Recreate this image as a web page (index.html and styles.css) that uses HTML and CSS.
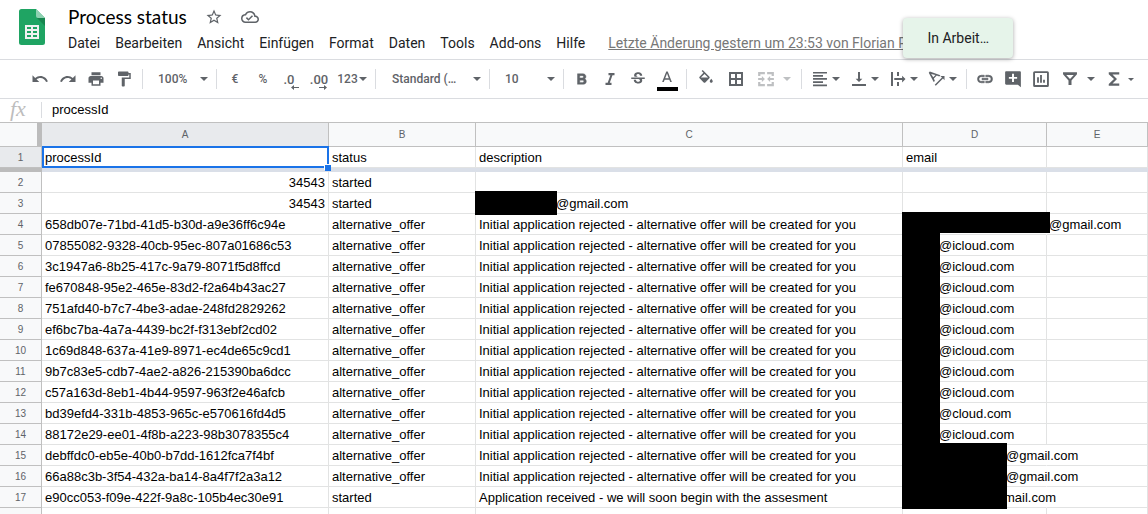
FILE: index.html
```html
<!DOCTYPE html>
<html lang="de">
<head>
<meta charset="utf-8">
<title>Process status</title>
<link rel="stylesheet" href="styles.css">
</head>
<body>
<header class="header">
  <svg class="logo" viewBox="0 0 26 36" aria-hidden="true">
    <path fill="#1fa463" d="M2.500 0H17l9 9v24.500a2.500 2.500 0 0 1-2.500 2.500h-21A2.500 2.500 0 0 1 0 33.500v-31A2.500 2.500 0 0 1 2.500 0z"/>
    <path fill="#17864f" d="M18 9h8v8z"/>
    <path fill="#8ed1b1" d="M17 0l9 9h-7a2 2 0 0 1-2-2z"/>
    <path fill="#f1f1f1" fill-rule="evenodd" d="M6 16h14v14H6zM8 18v2h4v-2zm6 0v2h4v-2zM8 22v2h4v-2zm6 0v2h4v-2zM8 26v2h4v-2zm6 0v2h4v-2z"/>
  </svg>
  <div class="heading">
    <div class="title-row">
      <h1 class="title">Process status</h1>
      <button class="title-button" aria-label="Markieren"><svg viewBox="0 0 24 24"><path d="M22 9.240l-7.190-.62L12 2 9.190 8.630 2 9.240l5.460 4.730L5.820 21 12 17.270 18.180 21l-1.630-7.030L22 9.240zM12 15.400l-3.760 2.270 1-4.280-3.320-2.880 4.380-.38L12 6.100l1.710 4.040 4.380.38-3.320 2.880 1 4.280L12 15.400z"/></svg></button>
      <button class="title-button" aria-label="Status"><svg viewBox="0 0 24 24"><path d="M19.350 10.040A7.490 7.490 0 0 0 12 4C9.110 4 6.600 5.640 5.350 8.040A5.994 5.994 0 0 0 0 14c0 3.310 2.690 6 6 6h13c2.760 0 5-2.240 5-5 0-2.640-2.050-4.780-4.650-4.960zM19 18H6c-2.210 0-4-1.790-4-4 0-2.050 1.530-3.760 3.560-3.970l1.070-.11.5-.95A5.469 5.469 0 0 1 12 6c2.620 0 4.880 1.860 5.390 4.430l.3 1.500 1.530.11A2.980 2.980 0 0 1 22 15c0 1.650-1.350 3-3 3zm-9-3.820l-2.090-2.090L6.500 13.500 10 17l6.010-6.010-1.410-1.410z"/></svg></button>
    </div>
    <nav class="menu">
      <button>Datei</button><button>Bearbeiten</button><button>Ansicht</button><button>Einfügen</button><button>Format</button><button>Daten</button><button>Tools</button><button>Add-ons</button><button>Hilfe</button>
      <a class="last-edit" href="#">Letzte Änderung gestern um 23:53 von Florian P</a>
    </nav>
  </div>
  <div class="toast" role="status">In Arbeit…</div>
</header>

<div class="toolbar" role="toolbar">
  <button class="tool" aria-label="Rückgängig"><svg viewBox="0 0 24 24"><path d="M12.500 8c-2.650 0-5.050.99-6.900 2.600L2 7v9h9l-3.620-3.620c1.390-1.160 3.160-1.880 5.120-1.880 3.540 0 6.550 2.310 7.600 5.500l2.370-.78C21.080 11.030 17.150 8 12.500 8z"/></svg></button>
  <button class="tool" aria-label="Wiederholen"><svg viewBox="0 0 24 24"><path d="M18.400 10.600C16.550 8.990 14.150 8 11.500 8c-4.650 0-8.580 3.030-9.960 7.220L3.900 16c1.050-3.190 4.050-5.500 7.600-5.500 1.950 0 3.730.72 5.120 1.880L13 16h9V7l-3.600 3.600z"/></svg></button>
  <button class="tool" aria-label="Drucken"><svg viewBox="0 0 24 24"><path d="M19 8H5c-1.660 0-3 1.340-3 3v6h4v4h12v-4h4v-6c0-1.660-1.340-3-3-3zm-3 11H8v-5h8v5zm3-7a1 1 0 1 1 0-2 1 1 0 0 1 0 2zm-1-9H6v4h12V3z"/></svg></button>
  <button class="tool" aria-label="Format übertragen"><svg viewBox="0 0 24 24"><path d="M18 4V3c0-.55-.45-1-1-1H5c-.55 0-1 .45-1 1v4c0 .55.45 1 1 1h12c.55 0 1-.45 1-1V6h1v4H9v11c0 .55.45 1 1 1h2c.55 0 1-.45 1-1v-9h8V4h-3z"/></svg></button>
  <span class="separator"></span>
  <label class="picker picker-small"><select aria-label="Zoom"><option>100%</option></select><i class="caret"></i></label>
  <span class="separator"></span>
  <button class="tool text-tool" aria-label="Währung">€</button>
  <button class="tool text-tool" aria-label="Prozent">%</button>
  <button class="tool text-tool decimal decimal-less" aria-label="Weniger Dezimalstellen">.0<svg class="decimal-arrow" viewBox="0 0 8 5"><path d="M0 2.500L3 0v2h5v1H3v2z"/></svg></button>
  <button class="tool text-tool decimal" aria-label="Mehr Dezimalstellen">.00<svg class="decimal-arrow" viewBox="0 0 8 5"><path d="M8 2.500L5 0v2H0v1h5v2z"/></svg></button>
  <button class="tool text-tool number-format">123<i class="caret"></i></button>
  <span class="separator"></span>
  <label class="picker picker-wide"><select aria-label="Schriftart"><option>Standard (…</option></select><i class="caret"></i></label>
  <span class="separator"></span>
  <label class="picker picker-small"><select aria-label="Schriftgröße"><option>10</option></select><i class="caret"></i></label>
  <span class="separator"></span>
  <button class="tool" aria-label="Fett"><svg viewBox="0 0 24 24"><path d="M15.600 11.790c.97-.67 1.650-1.770 1.650-2.790 0-2.260-1.750-4-4-4H6v14h8.040c2.090 0 3.710-1.700 3.710-3.790 0-1.520-.86-2.820-2.150-3.420zM9 7.500h3.500a1.500 1.500 0 0 1 0 3H9v-3zm4 9H9v-3h4a1.500 1.500 0 0 1 0 3z" stroke="#5f6368" stroke-width=".6"/></svg></button>
  <button class="tool" aria-label="Kursiv"><svg viewBox="0 0 24 24"><path d="M10 4v3h2.500l-3.600 10H6v3h8v-3h-2.300l3.600-10H18V4z"/></svg></button>
  <button class="tool" aria-label="Durchgestrichen"><svg viewBox="0 0 24 24"><path d="M7.240 8.750c-.26-.48-.39-1.030-.39-1.670 0-.61.13-1.160.4-1.670.26-.5.63-.93 1.110-1.290.48-.35 1.050-.63 1.700-.83.66-.19 1.390-.29 2.180-.29.81 0 1.540.11 2.210.34.66.22 1.230.54 1.690.94.47.4.83.88 1.080 1.430s.38 1.150.38 1.810h-3.010c0-.31-.05-.59-.15-.85-.09-.27-.24-.49-.44-.68-.2-.19-.45-.33-.75-.44-.3-.1-.66-.16-1.060-.16-.39 0-.74.04-1.030.13s-.53.21-.72.36c-.19.16-.34.34-.44.55-.1.21-.15.43-.15.66 0 .48.25.88.74 1.210.38.25.77.48 1.410.7H7.390c-.05-.08-.11-.17-.15-.25zM21 12v-2H3v2h9.620c.18.07.4.14.55.2.37.17.66.34.87.51.21.17.35.36.43.57.07.2.11.43.11.69 0 .23-.05.45-.14.66-.09.2-.23.38-.42.53-.19.15-.42.26-.71.35-.29.08-.63.13-1.010.13-.43 0-.83-.04-1.180-.13s-.66-.23-.91-.42c-.25-.19-.45-.44-.59-.75-.14-.31-.25-.76-.25-1.210H6.400c0 .55.08 1.130.24 1.580.16.45.37.85.65 1.210.28.35.6.66.98.92.37.26.78.48 1.220.65.44.17.9.3 1.380.39.48.08.96.13 1.440.13.8 0 1.530-.09 2.180-.28s1.210-.45 1.670-.79c.46-.34.82-.77 1.070-1.270s.38-1.070.38-1.710c0-.6-.1-1.140-.31-1.610-.05-.11-.11-.23-.17-.33H21V12z"/></svg></button>
  <button class="tool medium text-color" aria-label="Textfarbe"><svg viewBox="0 0 24 24"><path d="M11 2L5.500 16h2.250l1.120-3h6.250l1.120 3h2.250L13 2h-2zm-1.380 9L12 4.670 14.380 11H9.620z"/></svg></button>
  <span class="separator"></span>
  <button class="tool medium" aria-label="Füllfarbe"><svg viewBox="0 0 24 24"><path d="M16.560 8.940L7.620 0 6.210 1.410l2.380 2.380-5.150 5.150a1.490 1.490 0 0 0 0 2.120l5.500 5.500c.29.29.68.44 1.060.44s.77-.15 1.060-.44l5.500-5.500c.59-.58.59-1.530 0-2.120zM5.210 10L10 5.210 14.790 10zM19 11.500s-2 2.170-2 3.500c0 1.100.9 2 2 2s2-.9 2-2c0-1.330-2-3.500-2-3.500z"/></svg></button>
  <button class="tool medium" aria-label="Rahmen"><svg viewBox="0 0 24 24"><path fill-rule="evenodd" d="M2.700 2.700h18.600v18.600H2.700zM5.300 5.300v5.400h5.400V5.300zm8 0v5.400h5.400V5.300zm-8 8v5.400h5.400v-5.400zm8 0v5.400h5.400v-5.400z"/></svg></button>
  <button class="tool split disabled" disabled aria-label="Zellen verbinden"><svg viewBox="0 0 24 24"><path d="M1.500 2.500h9v3H4.500V8h-3zM13.500 2.500h9V8h-3V5.500h-6zM1.500 16h3v2.500h6v3h-9zM19.500 16h3v5.500h-9v-3h6zM1.500 10.700h5V8l4 4-4 4v-2.700h-5zM22.500 10.700h-5V8l-4 4 4 4v-2.700h5z"/></svg><i class="caret"></i></button>
  <span class="separator"></span>
  <button class="tool pair" aria-label="Horizontal ausrichten"><svg viewBox="0 0 24 24"><path d="M2.700 2.500h18.600v2.300H2.700zM2.700 6.700h13.300v2.300H2.700zM2.700 10.800h18.600v2.300H2.700zM2.700 15h13.300v2.300H2.700zM2.700 19.200h18.600v2.300H2.700z"/></svg><i class="caret"></i></button>
  <button class="tool pair" aria-label="Vertikal ausrichten"><svg viewBox="0 0 24 24"><path d="M16.500 11.500h-3.200V2.700h-2.600v8.800H7.500l4.500 4.500zM2.700 18.700v2.600h18.600v-2.600z"/></svg><i class="caret"></i></button>
  <button class="tool pair" aria-label="Zeilenumbruch"><svg viewBox="0 0 24 24"><path d="M2.700 2.700h2.600v18.600H2.700zM10.700 2.700h2.600V8h-2.600zM10.700 16h2.600v5.300h-2.600zM7 10.800h10.500V7.500L22 12l-4.500 4.500v-3.200H7z"/></svg><i class="caret"></i></button>
  <button class="tool pair" aria-label="Textdrehung"><svg viewBox="0 0 24 24"><path fill-rule="evenodd" d="M1 3.500L2.400 2l14.200 5-1.600 1.600-3.300-1.300-3.900 3.900 1.400 3.300L7.600 16zM4.200 5.200l2.800 4.500 3-3zM9 19.600L18.600 10l-2.100-2H22v5.600l-2-2.200L10.400 21z"/></svg><i class="caret"></i></button>
  <span class="separator"></span>
  <button class="tool" aria-label="Link einfügen"><svg viewBox="0 0 24 24"><path d="M3.900 12c0-1.710 1.390-3.100 3.100-3.100h4V7H7a5 5 0 0 0 0 10h4v-1.900H7c-1.710 0-3.100-1.390-3.100-3.100zM8 13h8v-2H8v2zm9-6h-4v1.900h4a3.100 3.100 0 0 1 0 6.200h-4V17h4a5 5 0 0 0 0-10z" stroke="#5f6368" stroke-width=".8"/></svg></button>
  <button class="tool" aria-label="Kommentar einfügen"><svg viewBox="0 0 24 24"><path d="M22.500 3c0-.9-.6-1.500-1.500-1.500H3c-.9 0-1.500.6-1.500 1.500v15c0 .9.600 1.500 1.500 1.500h15.500l4 3.500V3zM17.500 11.800h-4.200V16h-2.600v-4.200H6.500V9.200h4.200V5h2.600v4.200h4.200z"/></svg></button>
  <button class="tool" aria-label="Diagramm einfügen"><svg viewBox="0 0 24 24"><path fill-rule="evenodd" d="M3.500 1.500h17a2 2 0 0 1 2 2v17a2 2 0 0 1-2 2h-17a2 2 0 0 1-2-2v-17a2 2 0 0 1 2-2zm.5 2.500v16h16V4zM6.800 9.500h2.400V17H6.800zM10.800 6.500h2.400V17h-2.400zM14.800 13h2.400v4h-2.400z"/></svg></button>
  <button class="tool split" aria-label="Filter"><svg viewBox="0 0 24 24"><path fill-rule="evenodd" d="M2.700 3h18.600v2.500L14 14v6h-4v-6L2.700 5.500zM7 6.500l5 5.500 5-5.500z"/></svg><i class="caret"></i></button>
  <button class="tool pair sum" aria-label="Funktionen"><svg viewBox="0 0 24 24"><path d="M19 3H5v2.500l7 6.500-7 6.500V21h14v-3h-9l6-6-6-6h9z"/></svg><i class="caret caret-small"></i></button>
</div>

<div class="formula-bar">
  <span class="fx">fx</span>
  <input class="formula" aria-label="Formel" value="processId">
</div>

<table class="sheet">
  <colgroup><col class="col-index"><col class="col-a"><col class="col-b"><col class="col-c"><col class="col-d"><col></colgroup>
  <thead>
    <tr><th class="corner"></th><th class="selected">A</th><th>B</th><th>C</th><th>D</th><th>E</th></tr>
  </thead>
  <tbody>
    <tr class="frozen"><th class="selected">1</th><td class="active">processId<span class="selection"></span></td><td>status</td><td>description</td><td>email</td><td></td></tr>
    <tr class="freeze"><th></th><td colspan="5"></td></tr>
    <tr><th>2</th><td class="number">34543</td><td>started</td><td></td><td></td><td></td></tr>
    <tr><th>3</th><td class="number">34543</td><td>started</td><td><div class="masked"><span class="mask mask-name tall"></span>@gmail.com</div></td><td></td><td></td></tr>
    <tr><th>4</th><td>658db07e-71bd-41d5-b30d-a9e36ff6c94e</td><td>alternative_offer</td><td>Initial application rejected - alternative offer will be created for you</td><td class="spill"><div class="masked"><span class="mask mask-long"></span>@gmail.com</div></td><td></td></tr>
    <tr><th>5</th><td>07855082-9328-40cb-95ec-807a01686c53</td><td>alternative_offer</td><td>Initial application rejected - alternative offer will be created for you</td><td><div class="masked"><span class="mask mask-short"></span>@icloud.com</div></td><td></td></tr>
    <tr><th>6</th><td>3c1947a6-8b25-417c-9a79-8071f5d8ffcd</td><td>alternative_offer</td><td>Initial application rejected - alternative offer will be created for you</td><td><div class="masked"><span class="mask mask-short"></span>@icloud.com</div></td><td></td></tr>
    <tr><th>7</th><td>fe670848-95e2-465e-83d2-f2a64b43ac27</td><td>alternative_offer</td><td>Initial application rejected - alternative offer will be created for you</td><td><div class="masked"><span class="mask mask-short"></span>@icloud.com</div></td><td></td></tr>
    <tr><th>8</th><td>751afd40-b7c7-4be3-adae-248fd2829262</td><td>alternative_offer</td><td>Initial application rejected - alternative offer will be created for you</td><td><div class="masked"><span class="mask mask-short"></span>@icloud.com</div></td><td></td></tr>
    <tr><th>9</th><td>ef6bc7ba-4a7a-4439-bc2f-f313ebf2cd02</td><td>alternative_offer</td><td>Initial application rejected - alternative offer will be created for you</td><td><div class="masked"><span class="mask mask-short"></span>@icloud.com</div></td><td></td></tr>
    <tr><th>10</th><td>1c69d848-637a-41e9-8971-ec4de65c9cd1</td><td>alternative_offer</td><td>Initial application rejected - alternative offer will be created for you</td><td><div class="masked"><span class="mask mask-short"></span>@icloud.com</div></td><td></td></tr>
    <tr><th>11</th><td>9b7c83e5-cdb7-4ae2-a826-215390ba6dcc</td><td>alternative_offer</td><td>Initial application rejected - alternative offer will be created for you</td><td><div class="masked"><span class="mask mask-short"></span>@icloud.com</div></td><td></td></tr>
    <tr><th>12</th><td>c57a163d-8eb1-4b44-9597-963f2e46afcb</td><td>alternative_offer</td><td>Initial application rejected - alternative offer will be created for you</td><td><div class="masked"><span class="mask mask-short"></span>@icloud.com</div></td><td></td></tr>
    <tr><th>13</th><td>bd39efd4-331b-4853-965c-e570616fd4d5</td><td>alternative_offer</td><td>Initial application rejected - alternative offer will be created for you</td><td><div class="masked"><span class="mask mask-short"></span>@cloud.com</div></td><td></td></tr>
    <tr><th>14</th><td>88172e29-ee01-4f8b-a223-98b3078355c4</td><td>alternative_offer</td><td>Initial application rejected - alternative offer will be created for you</td><td><div class="masked"><span class="mask mask-short"></span>@icloud.com</div></td><td></td></tr>
    <tr><th>15</th><td>debffdc0-eb5e-40b0-b7dd-1612fca7f4bf</td><td>alternative_offer</td><td>Initial application rejected - alternative offer will be created for you</td><td class="spill"><div class="masked"><span class="mask mask-mid"></span>@gmail.com</div></td><td></td></tr>
    <tr><th>16</th><td>66a88c3b-3f54-432a-ba14-8a4f7f2a3a12</td><td>alternative_offer</td><td>Initial application rejected - alternative offer will be created for you</td><td class="spill"><div class="masked"><span class="mask mask-mid"></span>@gmail.com</div></td><td></td></tr>
    <tr><th>17</th><td>e90cc053-f09e-422f-9a8c-105b4ec30e91</td><td>started</td><td>Application received - we will soon begin with the assesment</td><td class="spill"><div class="masked"><span class="mask mask-mid overlap tall"></span>mail.com</div></td><td></td></tr>
    <tr><th></th><td></td><td></td><td></td><td></td><td></td></tr>
  </tbody>
</table>
</body>
</html>
```

FILE: styles.css
```css
* {
  box-sizing: border-box;
}

body {
  margin: 0;
  height: 100vh;
  overflow: hidden;
  background: #fff;
  color: #000;
  font-family: Roboto, "Liberation Sans", sans-serif;
}

button,
select,
input {
  margin: 0;
  padding: 0;
  border: 0;
  background: none;
  color: inherit;
  font: inherit;
}

svg {
  display: block;
  fill: #5f6368;
}

/* Header */
.header {
  position: relative;
  display: flex;
  gap: 23px;
  height: 59px;
  padding-left: 19px;
}

.logo {
  flex: none;
  width: 26px;
  height: 36px;
  margin-top: 9px;
}

.heading {
  flex: 1;
  min-width: 0;
  padding-top: 5px;
}

.title-row {
  display: flex;
  align-items: center;
  gap: 18px;
  height: 24px;
}

.title {
  margin: 0;
  font-family: Lato, Roboto, sans-serif;
  font-size: 19px;
  font-weight: 400;
  line-height: 24px;
}

.title-button svg {
  width: 18px;
  height: 18px;
}

.menu {
  display: flex;
  align-items: center;
  gap: 15px;
  height: 28px;
  font-size: 14px;
  line-height: 20px;
  color: #202124;
  white-space: nowrap;
}

.last-edit {
  margin-left: 8px;
  color: #777;
}

.toast {
  position: absolute;
  top: 18px;
  right: 135px;
  padding: 10px 24px;
  border-radius: 4px;
  background: #e6f4ea;
  box-shadow: 0 1px 4px rgba(0, 0, 0, .35);
  color: #202124;
  font-size: 14px;
  line-height: 20px;
}

/* Toolbar */
.toolbar {
  display: flex;
  align-items: center;
  height: 40px;
  padding-left: 26px;
  border-top: 1px solid #dadce0;
  border-bottom: 1px solid #dadce0;
  color: #5f6368;
  font-size: 12px;
  font-weight: 500;
}

.tool {
  flex: none;
  display: flex;
  align-items: center;
  justify-content: center;
  width: 28px;
  height: 26px;
}

.tool svg {
  flex: none;
  width: 18px;
  height: 18px;
}

.tool.medium {
  width: 30px;
}

.tool.pair {
  gap: 3px;
  width: 39px;
}

.tool.split {
  gap: 8px;
  width: 46px;
}

.tool.sum {
  justify-content: flex-start;
  gap: 5px;
  padding-left: 4px;
}

.tool.disabled {
  opacity: .4;
}

.caret {
  flex: none;
  border: 4px solid transparent;
  border-top-color: #5f6368;
  border-bottom: 0;
}

.caret-small {
  border-width: 3px;
  border-bottom: 0;
}

.separator {
  flex: none;
  width: 1px;
  height: 20px;
  margin: 0 4px;
  background: #dadce0;
}

.picker {
  flex: none;
  display: flex;
  align-items: center;
  padding: 0 4px 0 11px;
}

.picker select {
  flex: 1;
  min-width: 0;
  appearance: none;
}

.picker-small {
  width: 65px;
}

.picker-wide {
  width: 105px;
  padding-left: 12px;
}

.decimal {
  position: relative;
  font-size: 13px;
}

.decimal-less {
  padding-right: 4px;
}

.tool .decimal-arrow {
  position: absolute;
  right: 6px;
  bottom: 2px;
  width: 8px;
  height: 5px;
}

.number-format {
  gap: 1px;
  width: 38px;
  font-size: 12px;
}

.text-color {
  position: relative;
}

.text-color::after {
  content: "";
  position: absolute;
  right: 4px;
  bottom: 1px;
  left: 5px;
  height: 4px;
  background: #000;
}

/* Formula bar */
.formula-bar {
  display: flex;
  align-items: center;
  height: 24px;
  padding-bottom: 2px;
  border-bottom: 1px solid #c0c0c0;
}

.fx {
  width: 42px;
  height: 16px;
  padding-left: 10px;
  border-right: 1px solid #dadce0;
  color: #bdbdbd;
  font: italic 22px/14px "Liberation Serif", serif;
}

.formula {
  flex: 1;
  padding-left: 10px;
  font: 13px/20px "Liberation Sans", sans-serif;
}

/* Grid */
.sheet {
  width: 100%;
  border-spacing: 0;
  table-layout: fixed;
  font-family: "Liberation Sans", sans-serif;
  font-size: 13px;
  line-height: 18px;
}

.col-index { width: 42px; }
.col-a { width: 287px; }
.col-b { width: 147px; }
.col-c { width: 427px; }
.col-d { width: 144px; }

.sheet th,
.sheet td {
  height: 21px;
  padding: 2px 3px 0;
  border-right: 1px solid #e2e3e3;
  border-bottom: 1px solid #e2e3e3;
  text-align: left;
  white-space: nowrap;
}

.sheet th {
  border-color: #c0c0c0;
  background: #f8f9fa;
  color: #5f6368;
  font-size: 10px;
  font-weight: 400;
  text-align: center;
}

.sheet thead th {
  height: 24px;
  padding-top: 0;
}

.sheet .corner {
  border-right: 5px solid #bcbcbc;
}

.sheet th.selected {
  background: #e8eaed;
}

.sheet .number {
  text-align: right;
}

.sheet .spill {
  border-right-color: transparent;
}

.sheet .freeze th,
.sheet .freeze td {
  height: 4px;
  padding: 0;
  border: 0;
  background: #dadfe8;
  line-height: 0;
}

.sheet .freeze th {
  background: #bcbcbc;
}

.active {
  position: relative;
}

.selection {
  position: absolute;
  inset: -1px -1px -1px 0;
  border: 2px solid #1a73e8;
}

.selection::after {
  content: "";
  position: absolute;
  right: -4px;
  bottom: -5px;
  width: 6px;
  height: 6px;
  background: #1a73e8;
  box-shadow: -1px -1px 0 #fff;
}

.masked {
  display: flex;
  height: 18px;
  margin-left: -4px;
}

.mask {
  position: relative;
  flex: none;
  height: 21px;
  margin-top: -4px;
  margin-right: -1px;
  background: #000;
}

.mask.tall { height: 24px; }
.mask-name { width: 82px; }
.mask-short { width: 38px; }
.mask-mid { width: 105px; }
.mask-long { width: 148px; }
.mask.overlap { margin-right: -3px; }
```
